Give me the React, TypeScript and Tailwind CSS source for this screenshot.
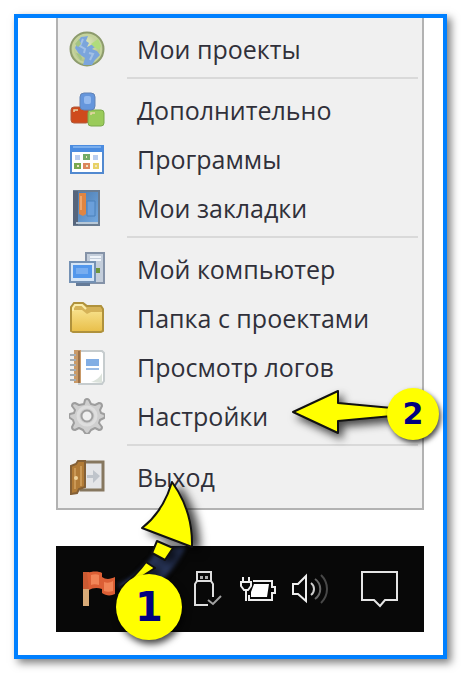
import type { ReactNode } from "react";

function GlobeIcon() {
  return (
    <svg viewBox="0 0 36 36" className="size-9" aria-hidden="true">
      <defs>
        <radialGradient id="globe" cx="45%" cy="35%">
          <stop offset="0" stopColor="#e2eabf" />
          <stop offset="1" stopColor="#b4c58c" />
        </radialGradient>
      </defs>
      <circle cx="18" cy="18" r="16.5" fill="url(#globe)" stroke="#8d9b6d" strokeWidth="2" />
      <circle cx="18" cy="18" r="14" fill="none" stroke="#c5d39c" strokeWidth="2" />
      <path d="M12 6l7-1-2 5 3 2-2 4 6-3 4 2-5 3 5 2 3 4-5 5-3 5h-9l2-7-6-4-4-6 3-7z" fill="#7ba5dc" />
      <path d="M14 8l-3 7 5 3-1 4M20 22l4 1-3 6" stroke="#a3c1e6" strokeWidth="2" fill="none" />
      <path d="M22 13l7-5 3 7-2 4-5-3z" fill="#b0dc7c" />
      <path d="M6 13l4-5 2 5-3 3zM7 22l4 1 2 4-1 3z" fill="#a4c482" />
    </svg>
  );
}

function BlocksIcon() {
  return (
    <svg viewBox="0 0 36 36" className="size-9" aria-hidden="true">
      <rect x="2" y="15" width="18" height="16" rx="3" fill="#cf4a1c" stroke="#b05a3c" />
      <rect x="19" y="18" width="16" height="16" rx="3" fill="#9acb5a" stroke="#7ba84b" />
      <rect x="11" y="1" width="15" height="17" rx="4" fill="#6596dc" stroke="#6283b5" />
      <rect x="15" y="4" width="7" height="8" rx="2" fill="#93b9ef" />
      <path d="M5 20v-2h4M22 23v-2h4" stroke="#e9d6a8" strokeWidth="1.5" fill="none" />
    </svg>
  );
}

function ProgramsIcon() {
  return (
    <svg viewBox="0 0 36 36" className="size-9" aria-hidden="true">
      <rect x="2" y="5" width="32" height="27" fill="#fff" stroke="#5189d0" strokeWidth="2" />
      <path d="M1 4h34v7H1z" fill="#4b8ce0" />
      <path d="M4 6h28" stroke="#7aaeed" strokeWidth="2" />
      <path d="M6 14h5v5H6zM24 14h5v5h-5z" fill="#b9cdf0" />
      <path d="M14 13h7v6h-7z" fill="#73ab67" />
      <path d="M5 22h7v6H5z" fill="#7aa94f" />
      <path d="M14 22h7v6h-7z" fill="#dc865c" />
      <path d="M24 22h6v6h-6z" fill="#e8d267" />
      <path d="M8 24h2v2H8zM17 15h1v2h-1zM17 24h2v2h-2zM26 24h2v2h-2z" fill="#eee5c0" />
    </svg>
  );
}

function BookIcon() {
  return (
    <svg viewBox="0 0 36 36" className="size-9" aria-hidden="true">
      <defs>
        <linearGradient id="cover" x2="1" y2="1">
          <stop offset="0" stopColor="#4878ac" />
          <stop offset="1" stopColor="#75aae2" />
        </linearGradient>
      </defs>
      <rect x="5" y="1" width="25" height="34" fill="url(#cover)" stroke="#6a7c91" strokeWidth="2" />
      <path d="M4 1h5v34H4z" fill="#56657c" />
      <path d="M18 11h8v15h-8z" fill="#6b9fda" stroke="#4b80bb" />
      <path d="M10 3h7v21l-3 2-4-2z" fill="#df8542" />
      <path d="M12 6v14" stroke="#efa66b" strokeWidth="2" />
      <path d="M7 33h22" stroke="#b8c8d7" strokeWidth="2" />
    </svg>
  );
}

function ComputerIcon() {
  return (
    <svg viewBox="0 0 36 36" className="size-9" aria-hidden="true">
      <rect x="17" y="2" width="18" height="30" fill="#c4cedb" stroke="#8593a8" strokeWidth="2" />
      <path d="M21 6h11M21 9h11" stroke="#eff4fa" strokeWidth="2" />
      <path d="M26 17h5v5h-5z" fill="#6e953b" />
      <rect x="1" y="11" width="25" height="20" fill="#d5e5f6" stroke="#7491b4" strokeWidth="2" />
      <rect x="4" y="14" width="19" height="13" fill="#5297ec" />
      <path d="M7 17h12v6H7z" fill="#77adf0" />
      <path d="M7 32h14v3H7z" fill="#657b98" />
    </svg>
  );
}

function FolderIcon() {
  return (
    <svg viewBox="0 0 36 36" className="size-9" aria-hidden="true">
      <defs>
        <linearGradient id="folder" x2="0" y2="1">
          <stop offset="0" stopColor="#f7e08a" />
          <stop offset="1" stopColor="#e9c04b" />
        </linearGradient>
      </defs>
      <path d="M2 31V7l3-4h9l4 3h14l2 3v22l-2 1H4z" fill="#d5b257" stroke="#b0923c" strokeWidth="2" />
      <path d="M3 31V10h10l5 4 4-2h11v18l-2 1z" fill="url(#folder)" />
      <path d="M4 11V8l2-3h7l4 4" fill="none" stroke="#faedaa" strokeWidth="2" />
    </svg>
  );
}

function NotebookIcon() {
  return (
    <svg viewBox="0 0 36 36" className="size-9" aria-hidden="true">
      <path d="M11 2h22l2 2v28l-2 3H10z" fill="#fff" stroke="#c6ccce" strokeWidth="2" />
      <path d="M5 1h7v33H5z" fill="#c99a68" />
      <path d="M10 2v32" stroke="#9c7148" strokeWidth="2" />
      <path d="M1 6h6M1 11h6M1 16h6M1 21h6M1 26h6M1 31h6" stroke="#a5adb4" strokeWidth="2" />
      <path d="M17 10h13v7H17z" fill="#82aee4" />
      <path d="M17 20h13" stroke="#9bbce5" strokeWidth="2" />
      <path d="M22 33c6-2 9-5 11-9v10z" fill="#dce3dc" />
    </svg>
  );
}

function GearIcon() {
  return (
    <svg viewBox="0 0 36 36" className="size-9" aria-hidden="true">
      <path
        d="M15 6l1-4q2-2 4 0l2 4 4 1 4-2q3 0 3 3l-2 4 1 3 3 1q2 2 0 4l-4 2-1 3 3 4q0 3-3 3l-4-2-4 2-2 3q-2 2-4 0l-2-3-4-2-4 2q-3 0-3-3l2-4-1-3-3-2q-2-2 0-4l4-1 1-3-3-4q0-3 3-3l4 2z"
        fill="#cfcfcf"
        stroke="#9d9d9d"
        strokeWidth="2"
        strokeLinejoin="round"
      />
      <circle cx="18" cy="18" r="9" fill="none" stroke="#dedede" strokeWidth="3" />
      <circle cx="18" cy="18" r="5.5" fill="#f0f0f0" stroke="#a0a0a0" strokeWidth="2" />
    </svg>
  );
}

function DoorIcon() {
  return (
    <svg viewBox="0 0 36 36" className="size-9" aria-hidden="true">
      <rect x="12" y="3" width="22" height="28" fill="#e4e5e8" stroke="#86775f" strokeWidth="3" />
      <path d="M18 16h6v-5l7 6-7 7v-5h-6z" fill="#bfc4cb" />
      <path d="M2 7l5-2 2-3h7v26l-6 2-2 4-6 1z" fill="#b17b37" stroke="#846036" strokeWidth="2" />
      <path d="M6 9v21M12 7v20" stroke="#ca9855" strokeWidth="2" />
      <circle cx="7" cy="19" r="2" fill="#f0d39a" />
    </svg>
  );
}

function FlagIcon() {
  return (
    <svg viewBox="0 0 34 36" className="h-9 w-[34px]" aria-hidden="true">
      <path d="M1 17h6v18H1z" fill="#d8aa77" />
      <path d="M1 1h6v17H1z" fill="#ca5a32" />
      <path d="M5 2c5-2 12-2 15 0v4c4 3 9 2 13 0v17c-4 2-9 2-13-1v-4c-5-2-10-1-13 1z" fill="#dc5f35" />
      <path d="M9 4c3-1 6-1 8 0v10c-3-1-6-1-8 0zM22 11c3 1 6 1 9-1v10c-3 1-6 1-9 0z" fill="#f28557" />
    </svg>
  );
}

function UsbIcon() {
  return (
    <svg viewBox="0 0 30 38" className="h-[38px] w-[30px]" fill="none" stroke="#dedede" strokeWidth="2" aria-hidden="true">
      <path d="M4 11V2h14v9M15 35H2V14l2-3h14l2 3v13" />
      <path d="M7 6h3v3H7zM12 6h3v3h-3z" fill="#aaa" stroke="none" />
      <path d="M15 30l5 4 8-8" stroke="#a2a2a2" />
    </svg>
  );
}

function BatteryIcon() {
  return (
    <svg viewBox="0 0 37 26" className="h-[26px] w-[37px]" fill="none" stroke="#eee" strokeWidth="2" aria-hidden="true">
      <path d="M4 1v5M10 1v5M1 6h12M2 6v4l3 4h4l3-4V6M7 14v11" />
      <path d="M14 5h19v6h3v6h-3v7H10v-5" />
      <path d="M15 8h15l-2 13H12v-5z" fill="#fff" stroke="none" />
    </svg>
  );
}

function SpeakerIcon() {
  return (
    <svg viewBox="0 0 37 32" className="h-8 w-[37px]" fill="none" stroke="#eee" strokeWidth="2" aria-hidden="true">
      <path d="M1 11h5l8-8v25l-8-7H1z" />
      <path d="M19 10c4 3 4 9 0 12" stroke="#d0d0d0" />
      <path d="M23 6c7 5 7 15 0 20" stroke="#686868" />
      <path d="M29 2c8 8 8 20 0 28" stroke="#484848" />
    </svg>
  );
}

function NotificationIcon() {
  return (
    <svg viewBox="0 0 37 38" className="h-[38px] w-[37px]" fill="none" stroke="#e5e5e5" strokeWidth="2" aria-hidden="true">
      <path d="M1 2h35v28H24l-5 6-6-6H1z" />
    </svg>
  );
}

function MenuItem({ icon, label }: { icon: ReactNode; label: string }) {
  return (
    <li>
      <button type="button" className="flex h-[49px] w-full items-center gap-8 pl-[11px] text-left">
        {icon}
        <span className="whitespace-nowrap">{label}</span>
      </button>
    </li>
  );
}

function Separator() {
  return (
    <li role="separator" className="h-3 pt-1 pr-1 pl-[69px]">
      <div className="h-0.5 bg-[#d9d9d9]" />
    </li>
  );
}

function SettingsPointer() {
  return (
    <div className="pointer-events-none absolute top-[370px] right-1 flex h-[52px] w-[150px] items-center justify-end">
      <svg viewBox="0 0 150 52" className="absolute inset-0 overflow-visible drop-shadow-[4px_5px_4px_rgba(0,0,0,0.7)]" aria-hidden="true">
        <path d="M4 24L49 3v12l54 5v8l-54 5v12z" fill="#ff0" stroke="#111" strokeWidth="2" strokeLinejoin="round" />
      </svg>
      <span className="relative flex size-[52px] items-center justify-center rounded-full bg-[#ffff00] text-[30px] leading-none font-bold text-[#000080] shadow-[2px_3px_5px_rgba(0,0,0,0.7)] [font-family:'DejaVu_Sans',sans-serif]">
        2
      </span>
    </div>
  );
}

function TrayPointer() {
  return (
    <div className="pointer-events-none absolute top-[462px] left-[96px] flex h-[160px] w-[84px] items-end pl-0.5">
      <svg viewBox="0 0 84 160" className="absolute inset-0 overflow-visible" aria-hidden="true">
        <path d="M3 105Q28 94 43 70L72 66Q56 98 28 116z" fill="#2b395f" className="blur-[2px]" />
        <g className="drop-shadow-[7px_4px_5px_rgba(0,0,0,0.75)]" fill="#ff0" stroke="#111" strokeWidth="2" strokeLinejoin="round">
          <path d="M58 2Q79 31 78 67L28 48Q49 32 58 2z" />
          <path d="M43 61l16 7-8 12-13-7z" />
          <path d="M32 82l9 6-17 11-17 8Q22 96 32 82z" />
        </g>
      </svg>
      <span className="relative flex size-[66px] items-center justify-center rounded-full bg-[#ffff00] text-[40px] leading-none font-bold text-[#000080] shadow-[2px_4px_7px_rgba(0,0,0,0.75)] [font-family:'DejaVu_Sans',sans-serif]">
        1
      </span>
    </div>
  );
}

export default function App() {
  return (
    <div className="bg-white p-[14px] [font-family:'Open_Sans','Noto_Sans',sans-serif]">
      <main className="relative border-4 border-[#0080ff] bg-white pr-[19px] pb-[23px] pl-[38px] shadow-[4px_4px_8px_rgba(0,0,0,0.5)]">
        <nav aria-label="Меню">
          <ul className="border-2 border-t-0 border-[#b2b2b2] bg-[#f0f0f0] pt-1.5 pb-[7px] text-[25px] leading-8 font-medium text-[#30303a]">
            <MenuItem icon={<GlobeIcon />} label="Мои проекты" />
            <Separator />
            <MenuItem icon={<BlocksIcon />} label="Дополнительно" />
            <MenuItem icon={<ProgramsIcon />} label="Программы" />
            <MenuItem icon={<BookIcon />} label="Мои закладки" />
            <Separator />
            <MenuItem icon={<ComputerIcon />} label="Мой компьютер" />
            <MenuItem icon={<FolderIcon />} label="Папка с проектами" />
            <MenuItem icon={<NotebookIcon />} label="Просмотр логов" />
            <MenuItem icon={<GearIcon />} label="Настройки" />
            <Separator />
            <MenuItem icon={<DoorIcon />} label="Выход" />
          </ul>
        </nav>
        <footer className="mt-9 flex h-[86px] items-center bg-[#080808] px-[26px]">
          <button type="button" aria-label="Флажок"><FlagIcon /></button>
          <div className="ml-auto flex items-center gap-4">
            <button type="button" aria-label="USB"><UsbIcon /></button>
            <button type="button" aria-label="Батарея"><BatteryIcon /></button>
            <button type="button" aria-label="Звук"><SpeakerIcon /></button>
            <button type="button" aria-label="Уведомления" className="ml-4"><NotificationIcon /></button>
          </div>
        </footer>
        <SettingsPointer />
        <TrayPointer />
      </main>
    </div>
  );
}
